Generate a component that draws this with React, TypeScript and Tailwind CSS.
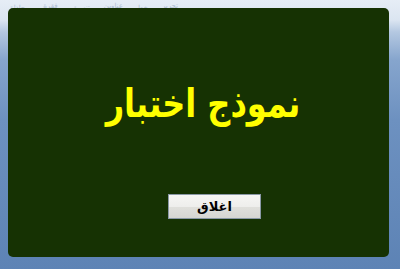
export default function App() {
  return (
    <div className="w-[400px] h-[269px] relative overflow-hidden bg-[linear-gradient(to_bottom,#e6edf6_0px,#dbe5f1_20px,#b4c8e1_32px,#86a5cd_60px,#6d91c0_120px,#5d83b5_269px)] pt-[8px] pl-[8px] pr-[11px] pb-[12px]">
      <div className="absolute top-0 left-0 w-full h-[20px] flex items-start gap-[14px] px-[10px] text-[7px] text-[#8aa0bb] opacity-60" style={{ fontFamily: '"DejaVu Sans", sans-serif' }}>
        <span className="mt-[3px]">محاذاة</span>
        <span className="mt-[1px]">فقرة</span>
        <span className="mt-[3px]">تنسيق</span>
        <span className="mt-[1px]">عناوين</span>
        <span className="mt-[3px]">خط</span>
        <span className="mt-[1px]">تحرير</span>
      </div>
      <div className="relative w-full h-full rounded-[5px] bg-[#163203] flex flex-col items-center">
        <div
          className="mt-[71px] h-[50px] leading-[50px] text-[32px] font-bold text-[#ffff00] pl-[9px] scale-y-[1.22]"
          dir="rtl"
          style={{ fontFamily: '"DejaVu Sans", "Liberation Sans", sans-serif' }}
        >
          نموذج اختبار
        </div>
        <button
          className="self-start ml-[160px] mt-[65px] w-[93px] h-[25px] border border-[#8a98a6] bg-[linear-gradient(to_bottom,#f6f6f4_0%,#eeeeec_50%,#e0e0dc_51%,#d6d6d2_100%)] text-[13px] font-bold text-black flex items-center justify-center"
          dir="rtl"
          style={{ fontFamily: '"DejaVu Sans", sans-serif' }}
        >
          اغلاق
        </button>
      </div>
    </div>
  );
}
